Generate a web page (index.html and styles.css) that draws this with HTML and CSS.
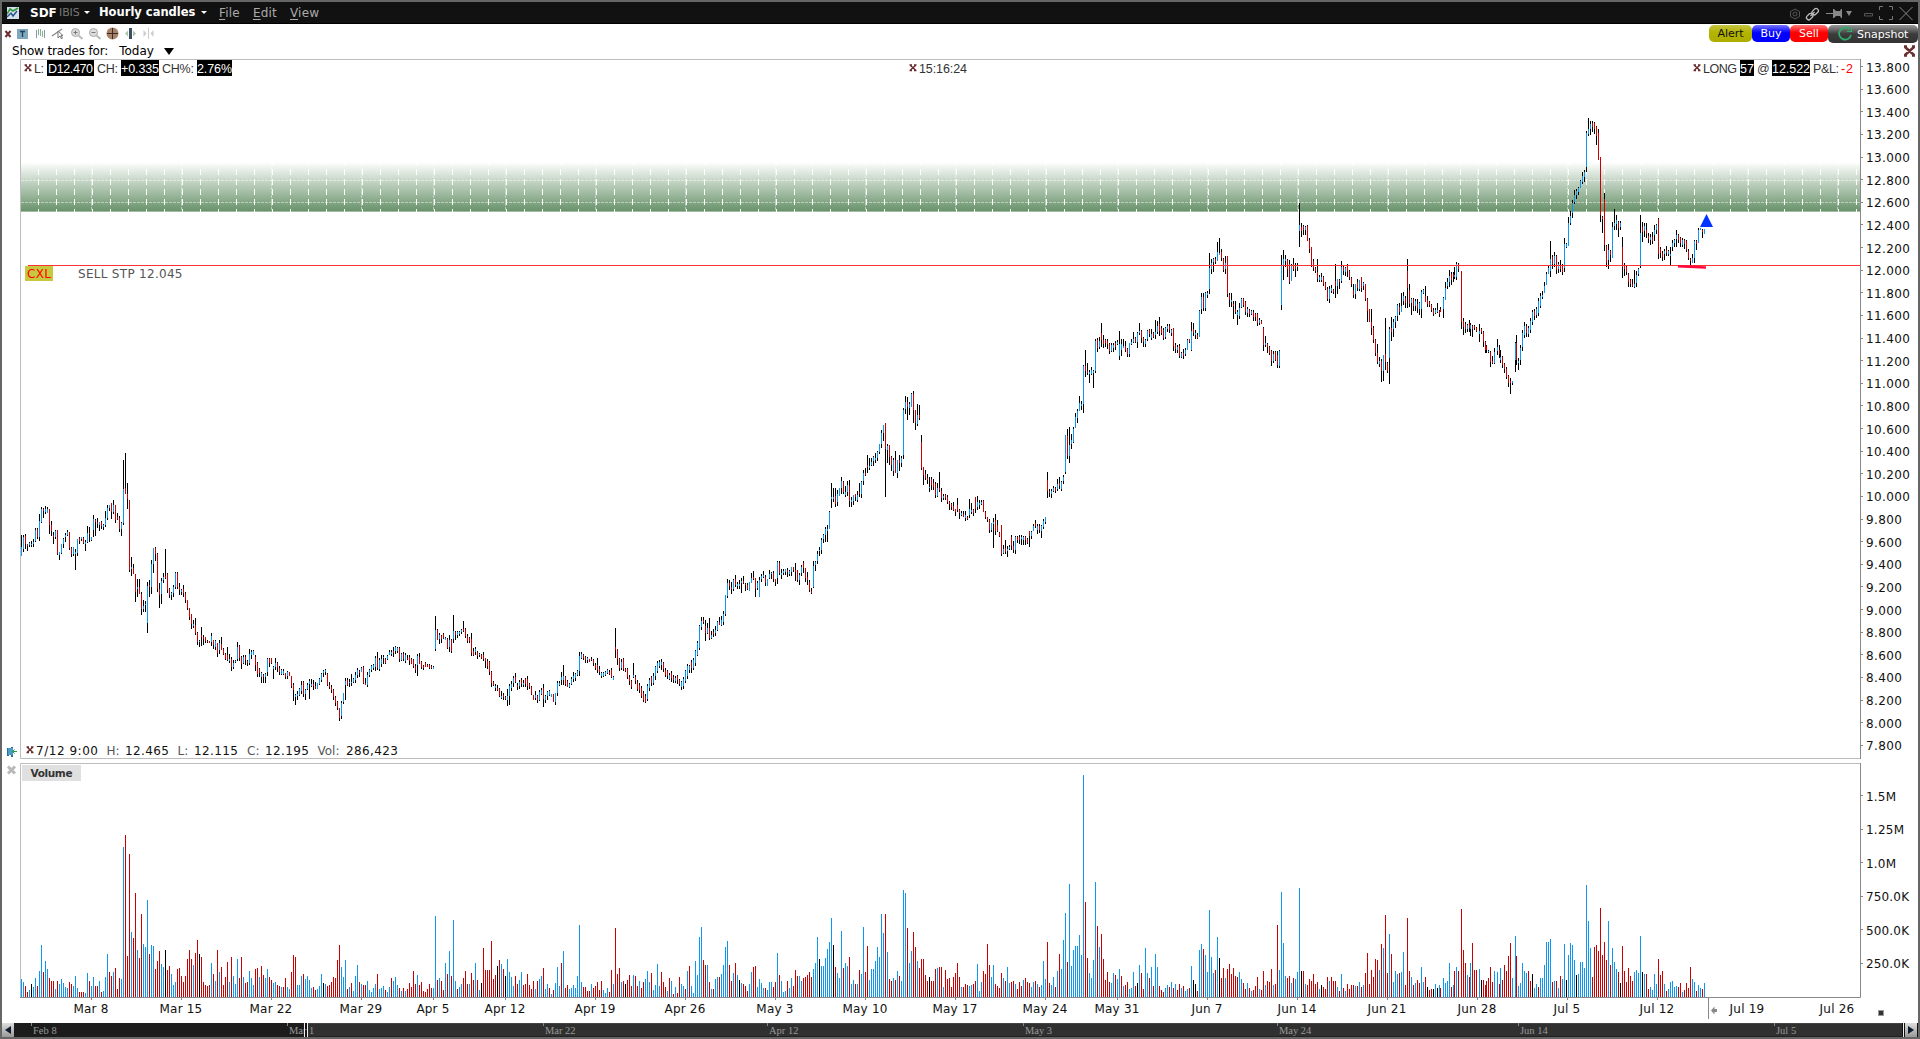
FILE: index.html
```
<!DOCTYPE html>
<html lang="en">
<head>
    <meta charset="UTF-8">
    <meta name="viewport" content="width=device-width, initial-scale=1.0">
    <title>SDF Hourly candles</title>
    <link rel="stylesheet" href="styles.css">
</head>
<body>

<div class="window">
    <header class="titlebar">
        <svg class="app-icon" width="12" height="12" viewBox="0 0 12 12">
            <rect width="12" height="12" fill="#d5e0ee"/>
            <path d="M0 7 L3 2 L6 4 L11 1" stroke="#2f9a3a" stroke-width="1.6" fill="none"/>
            <path d="M0 10 L4 6 L6 9 L10 4" stroke="#27508c" stroke-width="1.4" fill="none"/>
        </svg>
        <b class="symbol">SDF</b>
        <span class="exchange">IBIS</span>
        <i class="caret"></i>
        <b class="view-name">Hourly candles</b>
        <i class="caret"></i>
        <nav class="menu">
            <a><u>F</u>ile</a>
            <a><u>E</u>dit</a>
            <a><u>V</u>iew</a>
        </nav>
        <svg class="window-icons" width="126" height="18" viewBox="1788 3 126 18" fill="none">
            <path d="M1795 8 L1799.5 10.5 V15.5 L1795 18 L1790.500 15.500 V10.500 Z" stroke="#555"/>
            <circle cx="1795" cy="13" r="2" stroke="#555"/>
            <g stroke="#bbb" stroke-width="1.3">
                <rect x="-2" y="-3.500" width="4.500" height="7" rx="2" transform="translate(1815 10.500) rotate(45)"/>
                <rect x="-2" y="-3.500" width="4.500" height="7" rx="2" transform="translate(1809.500 15.500) rotate(45)"/>
                <path d="M1810.500 15 L1814.500 11"/>
            </g>
            <path d="M1826 12.500 H1834" stroke="#888"/>
            <path d="M1833 8 H1834 L1836 10 H1840 L1841 8 H1842 V17 H1841 L1840 15 H1836 L1834 17 H1833 Z" fill="#888"/>
            <path d="M1846 10 H1852 L1849 15 Z" fill="#888"/>
            <path d="M1864.500 12.500 H1872.500 V15 H1864.500 Z" stroke="#555"/>
            <path d="M1883 5.500 H1879.500 V9 M1889 5.500 H1892.500 V9 M1879.500 15 V18.500 H1883 M1892.500 15 V18.500 H1889" stroke="#777"/>
            <path d="M1899.500 6 L1912.500 19 M1912.500 6 L1899.500 19" stroke="#888"/>
        </svg>
    </header>

    <div class="toolbar">
        <svg class="tools" width="155" height="18" viewBox="2 24 155 18" fill="none">
            <path d="M5.500 31 L10.500 37 M10.500 31 L5.500 37" stroke="#6b2f2f" stroke-width="2"/>
            <rect x="17" y="29" width="11" height="10" fill="#7fa8bf"/>
            <path d="M20 31.500 H25 M22.500 31.500 V37" stroke="#223c55" stroke-width="1.300"/>
            <path d="M36.500 30 V38 M44.500 30 V38" stroke="#8a96b5"/>
            <path d="M38.500 29 V35 M40.500 29 V36 M42.500 31 V37" stroke="#84b48b"/>
            <path d="M52 36 L62 29" stroke="#888" stroke-width="1.300"/>
            <path d="M58 31 V38 L60 36 L61.500 39 L62.500 38 L61 35.500 H63 Z" stroke="#777" fill="#fff"/>
            <g stroke="#aaa">
                <circle cx="75.500" cy="32.500" r="4" fill="#ddd"/>
                <path d="M78.500 35.500 L82.500 39" stroke="#bbb" stroke-width="2"/>
                <path d="M73.500 32.500 H77.500 M75.500 30.500 V34.500" stroke="#777"/>
                <circle cx="93.500" cy="32.500" r="4" fill="#ddd"/>
                <path d="M96.500 35.500 L100.500 39" stroke="#bbb" stroke-width="2"/>
                <path d="M91.500 32.500 H95.500" stroke="#777"/>
            </g>
            <circle cx="112.500" cy="33.500" r="6" fill="#a8836b"/>
            <path d="M107 33.500 H118 M112.500 28 V39" stroke="#3c2a22"/>
            <rect x="129" y="28" width="3" height="11" fill="#3a4f60"/>
            <path d="M125 33.500 L128 30.500 V36.500 Z M136 33.500 L133 30.500 V36.500 Z" fill="#a9c8a9"/>
            <path d="M148.500 28 V39" stroke="#ccc"/>
            <path d="M143.500 30 V37 L146.500 33.500 Z M153.500 30 V37 L150.500 33.500 Z" fill="#ccc"/>
        </svg>
        <div class="actions">
            <button class="btn alert">Alert</button>
            <button class="btn buy">Buy</button>
            <button class="btn sell">Sell</button>
            <button class="btn snapshot">
                <svg width="16" height="16" viewBox="0 0 16 16" fill="none">
                    <path d="M12.500 3.500 A6 6 0 1 0 14 9" stroke="#2fae6b" stroke-width="1.700"/>
                    <path d="M10 5.500 L14.500 5.500 L14.500 1" stroke="#2fae6b" stroke-width="1.200"/>
                </svg>
                Snapshot
            </button>
        </div>
    </div>

    <div class="trades">
        <span>Show trades for:</span>
        <span class="period">Today</span>
        <i class="drop"></i>
        <svg class="close" width="13" height="12" viewBox="1903 46 13 12">
            <path d="M1905 48 L1914 56 M1914 48 L1905 56 M1904 47.500 H1907 M1912 47.500 H1915 M1904 56.500 H1907 M1912 56.500 H1915" stroke="#6b2f2f" stroke-width="2.600"/>
        </svg>
    </div>

    <svg class="chart" width="1916" height="964" viewBox="2 59 1916 964">
        <defs>
            <linearGradient id="zone" x1="0" y1="0" x2="0" y2="1">
                <stop offset="0" stop-color="#ffffff"/>
                <stop offset="1" stop-color="#69936b"/>
            </linearGradient>
            <path id="x" d="M1 1.500 L6 6 M6 1.500 L1 6 M0 1 H2.500 M4.500 1 H7 M0 6.500 H2.500 M4.500 6.500 H7" stroke="#6b2f2f" stroke-width="1.500"/>
        </defs>

        <!-- panel borders -->
        <path class="frame" d="M20.500 758.500 V59.500 H1860.500 M20.500 758.500 H1860.500"/>
        <path class="frame" d="M20.500 997.500 V763.500 H1860.500"/>
        <path class="axis" d="M1860.500 59 V759 M1860.500 763 V997.500 H20"/>
        <g id="ticks"></g>

        <!-- price zone -->
        <rect x="21" y="162" width="1839" height="49" fill="url(#zone)"/>
        <rect x="21" y="211" width="1839" height="1" fill="#a3bba4"/>
        <g id="zoneGrid"></g>

        <g id="candles"></g>
        <path d="M28 265.500 H1860" stroke="#ff3333"/>
        <path d="M1678 266.300 L1706 267.500" stroke="#ff0a3c" stroke-width="2.500"/>
        <path d="M1706.500 214 L1713 227 H1700 Z" fill="#0033ff"/>

        <rect x="25" y="266" width="28" height="15" fill="#c8c83e"/>
        <text class="txt red" x="27" y="278" textLength="24">CXL</text>
        <text class="txt dim" x="78" y="278" textLength="104.500">SELL STP 12.045</text>

        <!-- quote line -->
        <use href="#x" x="24.500" y="64"/>
        <g class="boxes">
            <rect x="47" y="60" width="47" height="16"/>
            <rect x="121" y="60" width="38" height="16"/>
            <rect x="197" y="60" width="35" height="16"/>
            <rect x="1740" y="60" width="14" height="16"/>
            <rect x="1772" y="60" width="38" height="16"/>
        </g>
        <g class="quote">
            <text x="34" y="73" textLength="10">L:</text>
            <text class="inv" x="48" y="73" textLength="45">D12.470</text>
            <text x="97" y="73" textLength="21">CH:</text>
            <text class="inv" x="121" y="73" textLength="38">+0.335</text>
            <text x="162" y="73" textLength="32">CH%:</text>
            <text class="inv" x="197" y="73" textLength="35">2.76%</text>
            <text x="919" y="73" textLength="48">15:16:24</text>
            <text x="1703" y="73" textLength="34">LONG</text>
            <text class="inv" x="1740" y="73" textLength="14">57</text>
            <text x="1757" y="73" textLength="13">@</text>
            <text class="inv" x="1772" y="73" textLength="38">12.522</text>
            <text x="1813" y="73" textLength="26">P&amp;L:</text>
            <text class="neg" x="1841" y="73" textLength="12">-2</text>
        </g>
        <use href="#x" x="909.500" y="64"/>
        <use href="#x" x="1693.500" y="64"/>

        <!-- bar under the cursor -->
        <use href="#x" x="26.500" y="746"/>
        <g class="txt">
            <text x="36" y="755" textLength="62">7/12 9:00</text>
            <text class="dim" x="106.500" y="755">H:</text>
            <text x="125" y="755" textLength="44">12.465</text>
            <text class="dim" x="177.500" y="755">L:</text>
            <text x="194" y="755" textLength="44">12.115</text>
            <text class="dim" x="247" y="755">C:</text>
            <text x="265" y="755" textLength="44">12.195</text>
            <text class="dim" x="317.500" y="755">Vol:</text>
            <text x="346" y="755" textLength="52">286,423</text>
        </g>
        <path d="M8 748 V756 M12 747 V757" stroke="#2b6d96" stroke-width="2"/>
        <rect x="8" y="748" width="5" height="7" fill="#4b9ac8"/>
        <path d="M17 751.500 H12 M14.500 749.500 L12.500 751.500 L14.500 753.500" stroke="#2a9a4a" fill="none"/>
        <path d="M8 766.500 L15 773.500 M15 766.500 L8 773.500" stroke="#b9b9b9" stroke-width="3"/>

        <rect x="22" y="765" width="59" height="16" fill="#e0e0e0"/>
        <text class="tab" x="30.500" y="777" textLength="42">Volume</text>
        <g id="volume"></g>
        <g id="dates" class="txt mid"></g>

        <path class="axis" d="M1708.500 998 V1019"/>
        <path d="M1711 1010.500 L1714.500 1006.500 V1009 H1717 V1012 H1714.500 V1014.500 Z" fill="#888"/>
        <rect x="1878.500" y="1010.500" width="5" height="5" fill="#333" stroke="#999"/>
    </svg>

    <footer class="scroller">
        <span class="arrow"><i class="left"></i></span>
        <svg class="track" width="1891" height="14" viewBox="14 1023 1891 14">
            <rect x="14" y="1023" width="290" height="14" fill="#1c1c1c"/>
            <rect x="308" y="1023" width="1594" height="14" fill="#303030"/>
            <path d="M308 1023.500 H1902" stroke="#444"/>
            <path d="M308 1036.500 H1902" stroke="#222"/>
            <path d="M1903.500 1023 V1037" stroke="#eee"/>
            <g id="overview" class="overview"></g>
            <path d="M304.500 1023 V1037 M307.500 1023 V1037" stroke="#eee"/>
        </svg>
        <span class="arrow"><i class="right"></i></span>
    </footer>
</div>

<script src="chart.js"></script>
</body>
</html>
```
FILE: styles.css
```
* {
    margin: 0;
    padding: 0;
    box-sizing: border-box;
}
body {
    font-family: Verdana, "DejaVu Sans", sans-serif;
    font-size: 12px;
    background-color: #666;
    overflow: hidden;
}
.window {
    width: 1920px;
    height: 1039px;
    padding: 2px;
    background-color: #666;
    display: flex;
    flex-direction: column;
}
svg {
    display: block;
    flex: none;
}
.titlebar {
    height: 22px;
    flex: none;
    display: flex;
    align-items: center;
    background-color: #111;
    border-bottom: 1px solid #000;
    color: #fff;
    padding-left: 5px;
    padding-right: 4px;
}
.app-icon {
    margin-right: 11px;
}
.symbol {
    font-size: 12px;
    width: 29px;
}
.exchange {
    font-size: 11px;
    color: #777;
    width: 25px;
    letter-spacing: -0.1px;
}
.caret {
    border: 3px solid transparent;
    border-top-color: #fff;
    border-bottom: 0;
    margin-right: 9px;
}
.view-name {
    width: 102px;
    font-size: 11.5px;
    letter-spacing: 0;
    white-space: nowrap;
    margin-top: -2px;
}
.menu {
    display: flex;
    gap: 13px;
    margin-left: 3px;
    color: #aaa;
    letter-spacing: 0.2px;
}
.menu u {
    text-underline-offset: 2px;
}
.window-icons {
    margin-left: auto;
}
.toolbar {
    height: 19px;
    flex: none;
    display: flex;
    justify-content: space-between;
    background-color: #fff;
}
.actions {
    display: flex;
    padding-top: 1px;
}
.btn {
    height: 17px;
    border: 0;
    border-radius: 5px;
    font-family: inherit;
    font-size: 11px;
    line-height: 17px;
    color: #fff;
    text-align: center;
}
.alert {
    width: 43px;
    color: #111;
    background: linear-gradient(#c5c545, #b3b300 45%, #aeae00);
}
.buy {
    width: 38px;
    background: linear-gradient(#7777ff, #0000ff 45%);
}
.sell {
    width: 38px;
    background: linear-gradient(#ff7777, #ff0000 45%);
}
.snapshot {
    width: 90px;
    height: 18px;
    display: flex;
    align-items: center;
    gap: 4px;
    padding-left: 9px;
    background: linear-gradient(#999, #3c3c3c 50%, #333);
}
.trades {
    height: 16px;
    flex: none;
    display: flex;
    align-items: center;
    padding-left: 10px;
    padding-right: 2px;
    background-color: #fff;
    line-height: 16px;
    letter-spacing: -0.15px;
}
.trades .period {
    margin-left: 11px;
    letter-spacing: 0;
}
.trades .close {
    margin-left: auto;
}
.drop {
    border: 5px solid transparent;
    border-top: 7px solid #000;
    border-bottom: 0;
    margin-left: 10px;
}
.chart {
    background-color: #fff;
}
.frame {
    fill: none;
    stroke: #bdbdbd;
}
.axis {
    fill: none;
    stroke: #888;
}
.txt {
    font-size: 12px;
    fill: #111;
}
.mid {
    text-anchor: middle;
    letter-spacing: 0.2px;
}
.dim {
    fill: #555;
}
.red {
    fill: #f00;
}
.quote {
    font-family: Arial, "Liberation Sans", sans-serif;
    font-size: 12.5px;
    fill: #333;
}
.quote .inv {
    fill: #fff;
}
.quote .neg {
    fill: #f00;
}
.tab {
    font-size: 10.5px;
    font-weight: bold;
    fill: #333;
}
.wick, .up, .down, .flat {
    fill: none;
    stroke: #000;
    shape-rendering: crispEdges;
}
.up {
    stroke: #0d96f2;
}
.down {
    stroke: #cc0000;
}
.scroller {
    height: 14px;
    flex: none;
    display: flex;
    background-color: #111;
}
.arrow {
    width: 12px;
    flex: none;
    display: flex;
    align-items: center;
    justify-content: center;
    background: linear-gradient(#ddd, #999);
}
.arrow i {
    border: 4px solid transparent;
}
.arrow .left {
    border-left: 0;
    border-right: 6px solid #0c1a2c;
}
.arrow .right {
    border-right: 0;
    border-left: 6px solid #0c1a2c;
}
.overview {
    font-family: "Liberation Serif", serif;
    font-size: 10.5px;
    fill: #999;
}
```
FILE: chart.js
```
// Each bar: colour (b up, r down, k unchanged), high y, upper wick, body, lower wick.
// Bars are 2px apart, @n moves to another x.
const candleData = `@21 b535,12,9,0 b535,2,12,3 r534,2,8,5 r544,0,2,5 b542,1,2,2 b541,3,1,2 b539,3,2,3 b528,2,11,1 r528,1,8,2 b514,7,16,4
b507,2,13,1 r508,1,2,7 b506,3,3,2 b507,2,4,0 r509,0,16,9 r521,4,6,5 r532,3,2,7 b530,1,6,2 r530,0,24,1 b552,0,3,5
b544,0,9,1 b538,1,5,4 b533,2,2,5 b530,2,3,1 r532,0,16,2 r547,1,6,3 b547,0,7,2 b549,3,2,16 b539,0,14,3 r537,1,3,3
b537,0,2,2 r537,1,5,1 b540,2,2,7 b526,7,9,1 r527,6,1,8 b537,0,3,1 b515,4,11,7 r519,1,2,14 r518,4,2,4 b522,0,3,6
r521,1,4,3 b524,1,2,3 b511,7,7,2 b505,3,10,2 b505,0,3,3 r503,0,9,7 b500,5,7,2 r505,0,15,3 r513,4,2,1 r516,2,11,3
b522,1,6,7 b460,29,34,2 r453,35,6,0 r483,11,5,10 r500,0,70,2 b557,10,2,7 r564,4,6,0 r574,0,18,10 b579,8,2,8 r579,8,7,0
r592,2,15,6 b600,6,3,3 b601,3,1,7 b582,4,37,10 r580,5,2,10 b560,4,23,7 b548,0,16,9 r547,1,6,7 r553,1,35,3 r583,6,6,13
b578,3,13,10 b573,4,3,3 r549,27,2,1 r573,1,16,3 r588,1,6,3 b592,1,2,5 b585,2,6,4 b572,1,14,2 r572,1,14,2 r583,4,3,5
b589,1,2,3 r585,4,4,4 r592,1,7,3 r600,0,8,2 r608,0,9,3 r614,0,10,5 b620,4,2,2 r618,7,8,2 r632,1,9,3 b640,1,1,5
r627,8,2,9 r635,2,2,6 r637,0,4,2 r640,1,1,1 r641,0,2,0 b633,3,6,4 r640,0,5,4 b640,1,6,3 r643,0,10,4 b640,3,7,4
r637,7,6,0 r648,1,5,1 r653,1,5,1 r647,8,5,1 b654,5,2,2 r657,2,8,4 b660,3,4,2 b660,1,1,1 b642,5,12,2 r645,1,12,3
r656,1,7,5 b655,2,6,1 r655,2,3,5 r660,1,2,3 b649,5,9,2 b650,2,3,4 b650,1,4,0 r655,2,8,6 r662,1,11,3 r668,1,4,4
b672,1,4,6 r674,1,2,6 b673,1,3,6 b658,1,13,4 r658,1,4,4 r658,0,5,1 b666,1,2,10 b658,5,4,3 r662,1,5,4 r666,2,4,3
b669,1,4,1 b669,2,3,1 r673,0,4,2 b671,1,4,3 r672,0,4,0 r676,0,10,2 r683,2,5,11 b694,1,2,8 b691,3,2,4 b688,1,6,1
b681,4,6,3 r681,1,12,3 b689,1,4,6 b683,2,4,1 b679,2,3,15 b679,5,2,1 r680,4,2,4 r682,4,3,0 b683,0,6,0 b678,1,5,1
b673,1,6,2 b670,1,2,4 b669,1,2,3 r673,1,11,1 r682,3,2,2 r685,2,3,3 r689,1,7,3 r696,1,6,3 r701,1,6,2 r708,0,10,3
b701,2,13,3 b693,0,9,2 b678,3,4,15 r678,2,5,1 b679,3,1,4 b674,8,1,3 b678,1,3,1 b672,3,5,3 b668,2,5,3 r670,1,2,4
b667,1,4,0 r666,1,16,1 r678,5,2,0 b672,3,10,2 b669,1,5,2 b665,1,4,2 b664,1,3,2 b656,2,9,4 r652,6,10,2 b658,2,9,2
b655,4,5,3 b655,2,1,6 r658,1,4,1 b655,1,3,1 b650,2,3,0 b650,2,2,2 r647,4,2,4 b646,1,4,3 b647,1,3,2 r647,1,11,3
b653,1,6,1 r652,2,5,2 b653,2,6,2 r655,3,1,1 r655,2,4,4 r658,1,5,0 r659,1,6,2 r664,2,4,3 b654,2,9,11 r653,4,7,0
r661,1,5,2 r665,1,2,2 r662,1,4,0 r664,1,2,0 r664,1,3,1 r665,1,2,1 b666,1,2,0 b616,14,19,2 r629,1,10,0 b633,2,4,5
r635,1,3,4 r633,1,4,1 b637,1,2,0 r638,1,9,1 b635,5,7,5 r639,1,11,2 b615,16,8,4 r631,1,3,5 b631,1,3,3 b631,1,2,2
b629,1,2,2 r621,8,2,1 r628,1,7,2 r634,2,5,2 r637,1,3,2 r633,6,14,3 r648,3,4,1 b647,2,3,3 r651,1,4,3 b653,1,1,2
r654,1,3,1 r652,3,4,2 r658,0,3,7 r659,2,5,3 r661,1,10,3 r671,1,11,4 r681,1,3,1 b684,2,2,3 r685,3,2,1 r688,1,7,1
b691,5,2,1 r693,2,2,3 r696,1,2,1 b689,7,4,6 b684,2,10,9 b681,3,4,3 b676,2,5,4 r673,4,5,1 r683,2,2,3 b680,2,4,3
r678,2,4,3 b680,3,2,2 r678,1,5,3 r676,3,7,4 r683,1,3,2 r686,1,7,1 r695,0,5,0 b691,4,3,2 r695,1,4,3 b690,2,8,1
b688,2,4,1 r684,4,11,8 b695,1,4,3 b691,1,4,4 b690,1,4,1 b694,0,3,0 r694,0,8,0 b693,0,9,3 b681,2,10,3 b681,2,2,1
b672,5,3,5 b665,11,4,5 r676,1,7,2 r680,1,6,0 b683,1,3,1 b677,2,5,1 b672,4,3,3 b673,1,4,3 b670,1,4,1 b652,4,15,5
b652,2,4,1 r654,1,3,2 r656,1,3,3 b657,1,2,3 r659,0,3,0 r657,2,1,1 r659,1,3,3 r663,2,3,2 r658,7,5,3 r666,3,3,3
b672,1,3,2 b672,1,3,1 b671,1,3,1 b669,1,3,1 r670,2,2,1 r668,2,7,1 b676,1,3,0 r628,19,3,8 r649,0,10,6 r658,1,9,3
b659,3,6,2 r658,1,10,2 r668,1,2,1 r668,1,8,2 r675,2,4,4 r680,1,6,2 b663,12,2,1 r675,2,4,3 r680,2,7,2 r683,2,5,3
r686,2,8,2 r691,2,7,2 r694,2,6,1 b684,2,13,2 b678,2,8,3 r676,1,6,3 b673,3,7,2 b666,1,9,4 b661,2,8,2 b660,2,4,2
b659,3,3,5 r662,1,6,3 r668,2,5,2 r670,1,5,3 b673,2,4,1 r671,2,5,4 r675,2,3,3 b676,2,3,2 r675,1,4,4 r679,1,4,2
b681,1,5,3 b677,2,7,3 b670,1,10,2 b664,2,10,3 b665,1,4,3 r660,2,6,5 b658,2,8,2 b650,1,12,3 b641,2,12,1 b625,1,22,2
b617,4,6,3 r617,3,2,2 r620,6,7,8 b623,5,5,1 r618,10,10,2 b631,4,3,1 r629,3,2,3 b626,4,3,3 b621,1,8,1 r617,5,3,0
b616,4,5,1 b611,3,8,3 b595,0,19,2 b579,4,13,2 r580,3,3,4 r582,5,2,5 b579,1,9,2 r575,4,6,2 b582,2,2,3 b580,4,2,3
b578,3,2,10 r576,5,2,1 r583,1,1,6 r583,2,4,1 b582,0,9,0 b573,5,5,0 r571,6,2,1 r578,0,11,8 b581,2,5,2 b577,3,17,0
b574,2,3,3 b571,4,2,1 r575,2,6,3 b579,0,7,0 b570,4,4,1 b572,1,1,5 r571,2,6,3 r579,0,3,4 b561,1,16,6 r561,2,10,2
b569,4,2,4 b569,2,2,2 b569,0,3,3 r568,2,2,5 b570,1,3,2 b567,0,5,4 r567,0,3,2 r563,7,2,9 r570,0,10,2 b573,2,5,5
b565,2,6,3 r561,2,5,5 r568,0,10,4 r572,5,3,5 r580,2,8,2 r588,3,2,1 b561,5,21,1 b561,1,3,6 b551,3,7,3 b547,3,1,5
b538,2,10,4 b534,1,4,4 b527,2,6,7 b525,4,2,11 b511,1,17,0 b483,14,2,9 b488,9,2,3 r488,8,8,3 b490,4,8,4 b488,0,8,0
b477,4,7,6 r481,1,10,2 b486,6,3,2 b481,4,7,4 r480,6,15,6 b497,3,2,5 b495,0,6,4 r494,0,3,4 b491,4,5,2 r483,9,2,3
b481,1,12,4 b470,3,8,4 r468,5,2,1 r455,10,2,6 b458,8,2,2 b458,4,3,1 b456,1,4,5 b453,5,2,3 b451,1,6,3 b444,0,8,2
b430,3,11,4 b425,0,8,8 r423,0,26,48 b444,2,4,13 r445,0,12,8 r456,1,8,6 b458,2,11,5 r451,9,13,0 b460,0,13,5 r455,5,3,8
b456,2,5,4 b408,2,45,4 b396,6,7,5 r397,5,5,13 b402,2,4,7 b393,1,13,0 r391,3,16,13 r410,0,13,7 b404,11,9,2 r405,10,3,2
r435,7,26,2 r467,0,8,10 r470,4,4,2 r474,4,2,4 b477,10,1,4 r477,2,6,5 r479,4,4,3 r482,2,11,3 b483,5,8,1 r472,16,2,2
r488,3,7,4 b494,2,2,2 r494,1,3,2 r495,2,5,2 r501,1,2,6 r503,1,3,3 r502,4,4,1 r509,0,3,4 r498,7,5,2 r509,1,3,6
b511,2,2,1 r511,3,3,0 b511,4,3,3 r516,1,2,1 b499,10,6,3 b503,7,2,2 r509,1,3,3 r497,0,12,4 b496,6,5,3 b500,3,2,4
b500,2,2,1 r500,1,11,0 r511,1,5,2 r517,0,3,2 r519,1,10,3 b523,0,7,2 b518,4,2,24 r514,6,11,4 r520,5,6,1 r532,1,3,1
r525,0,29,2 b545,4,4,1 r540,8,4,2 b546,3,2,6 b545,2,2,1 r535,2,9,4 r541,5,4,3 b536,1,13,4 r536,1,3,3 r535,2,3,4
b535,2,2,6 b536,1,3,5 r536,1,3,5 r538,1,4,1 r531,0,5,11 b531,1,4,3 b524,2,5,0 r520,3,3,2 b524,2,4,4 r524,2,4,3
b525,1,5,7 b519,2,6,2 b517,0,5,2 r472,8,11,7 r489,2,2,4 b489,2,3,4 b486,2,3,1 r487,1,3,2 b479,5,5,2 r477,6,3,3
b481,1,7,2 b475,2,4,3 b435,0,37,2 r429,7,20,3 b427,18,11,7 b434,6,4,5 b427,2,13,1 b413,4,11,0 b409,2,7,5 b396,7,8,0
b401,3,2,4 b365,1,38,9 r350,16,5,6 r363,8,2,2 b370,2,2,9 b367,3,4,1 b370,1,2,15 b339,2,30,2 r338,2,8,4 b337,4,6,2
r323,10,7,7 r335,5,4,4 r339,1,3,4 r339,2,3,5 r343,1,7,3 b343,2,6,1 b343,2,3,4 r341,2,4,3 b340,2,2,1 b331,13,12,4
b339,5,6,6 b339,7,2,0 r341,5,4,2 r348,1,5,3 b343,0,11,3 b339,3,2,1 b332,7,3,1 r337,1,4,1 b332,1,9,6 b323,8,2,2
r330,1,7,5 r337,1,4,5 b339,1,4,3 b330,1,8,2 r329,1,4,3 b329,5,4,2 r332,1,4,1 b320,12,3,4 b321,5,6,2 r317,7,7,5
r326,2,5,2 r328,2,8,2 b327,1,9,2 b324,2,3,3 r324,2,4,3 b329,1,3,3 r328,0,18,5 r343,2,4,4 b345,2,3,3 r344,2,10,2
b352,1,4,1 r349,4,3,3 b348,2,4,2 b339,1,10,0 r339,0,3,1 b322,9,19,1 r323,6,4,3 b330,3,2,4 r333,2,3,1 b310,1,26,0
b293,4,12,5 r293,4,11,3 b292,1,15,3 b291,2,2,3 b253,15,21,5 b259,4,6,5 b258,1,3,10 r257,2,3,2 b242,10,9,0 b238,15,2,0
r249,3,6,3 r258,1,11,2 b256,7,6,5 r256,0,38,3 r293,2,5,7 b293,7,2,5 r301,3,2,13 r301,8,3,2 b310,2,3,10 b303,5,8,3
b298,1,8,1 r298,1,6,2 r301,1,10,3 b307,2,4,4 r309,1,4,3 b310,1,3,1 r310,2,5,4 r313,1,3,4 r313,1,9,3 b318,2,3,2
r320,1,3,0 r327,1,17,6 b336,7,2,2 r343,1,3,6 r346,1,6,2 r350,1,10,5 b351,3,7,2 r351,1,8,1 r351,4,10,3 b350,1,15,2
b255,11,39,5 b250,9,7,14 b255,4,2,6 r259,1,9,8 r260,4,18,2 b264,2,15,0 r258,6,5,2 r263,3,3,8 b263,2,2,4 b203,22,6,16
r223,4,4,6 r225,1,4,5 b226,1,3,5 r225,1,15,0 r238,2,9,4 r247,0,18,2 r259,2,7,3 r267,1,3,2 r259,13,7,3 b275,2,3,2
b273,4,3,2 r276,1,7,2 r282,1,6,1 r287,2,10,2 b286,3,10,4 b285,3,3,2 r289,1,2,2 r264,17,5,12 b279,0,7,8 r279,1,2,7
b261,6,14,2 r265,2,4,4 b267,1,4,4 r264,1,6,6 r270,1,6,3 r277,1,6,3 r284,6,5,3 b284,0,10,5 r279,3,6,3 b280,0,9,2
r277,0,11,4 b282,1,3,4 r284,0,15,2 r298,1,12,11 r309,0,13,0 r309,13,6,7 r326,2,12,3 r339,1,13,3 r344,9,9,2 b357,4,3,3
r359,2,10,11 b355,0,16,10 r318,36,8,8 r362,1,8,2 b327,2,29,26 r317,11,4,9 b319,3,7,8 b316,1,5,6 b304,1,11,5 r303,4,5,3
b293,13,6,0 b292,4,5,4 r296,2,5,5 r259,12,17,20 r284,6,14,3 b298,1,4,12 r298,1,7,5 b299,2,5,5 r299,5,4,5 b302,1,6,6
b290,2,17,9 b289,1,3,1 r286,10,6,0 r296,4,4,3 r301,1,3,2 r304,1,5,2 r308,2,4,2 b308,2,3,1 b303,7,2,1 r310,1,3,3
@1440 r307,2,3,0 @1443 b297,1,11,9 b282,6,12,0 b278,4,4,3 b270,6,6,5 r272,2,6,5 r272,2,3,5 @1454 b267,8,2,2 b262,2,13,3 r263,1,5,3
@1461 r271,0,51,7 r318,3,6,8 r322,2,5,4 b324,1,4,3 r320,3,5,4 @1470 b323,2,4,7 r325,1,3,8 r325,1,2,2 r327,1,3,1
@1479 b324,7,3,8 r328,1,3,2 r331,1,10,5 r341,1,8,3 @1486 r345,1,4,3 b350,1,1,1 r351,1,10,5 r356,5,2,1 b348,4,11,1
@1497 b339,8,4,4 r345,5,4,4 @1500 b350,7,3,3 r356,1,8,3 r363,1,5,4 r367,2,8,2 r375,1,7,4 r378,3,2,11 b381,0,2,2
@1515 b342,1,17,12 @1516 r335,8,17,5 b358,3,2,7 b345,3,12,5 b330,3,14,4 b322,4,9,3 r324,2,7,4 b326,2,6,3 b318,3,9,3 b310,2,10,3 r309,2,5,4
b307,2,6,3 b298,3,12,3 b293,3,10,2 b291,4,2,2 b282,4,7,0 b272,2,11,0 b266,2,6,0 b241,18,12,6 r255,2,7,5 b252,4,8,3
r255,1,14,4 b262,2,5,4 r260,5,4,3 r264,1,7,3 b238,6,24,4 b243,1,3,1 b217,6,23,0 b211,5,7,2 b200,3,10,5 b190,5,7,2
b189,2,4,4 b187,1,4,3 b180,1,7,0 b172,4,6,2 b170,2,5,5 b131,2,34,5 b118,11,5,2 b121,3,5,6 r121,2,4,5 r122,1,6,5
r126,1,9,9 r129,4,27,0 r157,0,58,7 r216,1,2,14 r193,6,46,6 r245,1,17,4 b244,6,10,9 r250,1,4,7 b222,5,31,0 b209,14,3,4
b215,5,4,6 r221,1,6,9 b221,2,4,3 r237,10,20,11 r263,2,4,7 r266,1,5,3 r273,1,8,5 r279,1,4,3 r279,5,2,1 b270,14,3,1
b271,4,8,4 b268,1,5,2 b215,18,32,3 r222,5,5,10 b223,3,5,6 r223,7,4,4 r233,3,3,4 b234,3,3,5 r232,5,4,3 b225,5,5,6
b224,1,5,4 r218,1,35,5 r247,2,4,5 r251,2,4,4 b249,2,3,6 r246,4,3,3 b250,1,3,2 b247,7,2,9 b240,3,4,4 b239,1,3,4
b230,5,4,8 r234,1,5,3 r237,1,5,4 b238,2,5,2 r239,1,4,5 r240,1,9,2 r249,2,7,2 r258,1,2,4 b254,4,5,0 b240,1,17,5
r240,1,3,6 b228,2,13,0 b228,0,2,0 r229,1,2,6 b229,0,5,0`;

// Volume bars: colour and height.
const volumeData = `@21 b18 b15 r11 r5 b7 k13 b10 b19 r11 b26 b52 r25 b36 b28 r19 r16 r16 b8 r16 b13 b18 b14 b10 b9 r15 r13 b11 b21 b9 r5 r5 r5 b4 b24 r16 b11 b20 r11 r11 b16
r5 b6 b20 b43 r25 r21 b25 r29 r8 r19 b18 b150 r162 r41 r143 b65 r59 r104 b47 r39 r83 b53 b50 b97 r43 b52 b51 r28 r36 r46 b33 b30 k47 r27 r31 b23 b12 b15 r28 r29
r21 r15 r21 r38 r47 r38 b32 r44 r57 k43 r40 r15 r12 r11 r12 b34 r23 b16 r47 b25 r30 r12 r20 r35 b15 r40 b21 b13 b38 r19 r40 b20 r14 r15 b26 b19 b12 r28 r29 b20
r31 r22 b19 b28 r20 r17 b14 b15 r12 r11 b10 r10 r19 b10 b8 r25 r42 r40 b12 b12 b21 r23 b18 b21 b17 b9 r10 r7 b8 b11 b23 k14 b13 r11 r12 r15 r20 r19 r37 r52
b30 b20 b37 r8 b10 r14 b6 b21 b32 r15 b13 r12 r12 b16 b7 b5 b9 b13 r23 b8 b9 b11 r7 b5 b10 r19 b16 b20 b12 r9 b6 r9 b6 r8 r14 r10 r26 r13 b22 r12
r15 r6 r5 r8 r13 r9 b9 b81 r17 b19 r16 r7 b34 r23 b46 r21 b77 b16 r8 b10 b13 r19 r26 r13 b13 r24 r17 b34 r17 b7
@481 k14 r49 r27 r27 r27 r56 r18 r22 k31 r37 b33 r28 k21 b38 b25 b20 b11 r21 r13 b17 b25 r12 r13 r23 r12 r8 r16 b8 r16 b18 b21 r29 b8 b13 r9 b3 r7 b14 b30 b11
r34 b46 r9 r12 b8 b9 b12 b9 b21 b72 b15 r10 r10 r6 r6 b13 r9 r11 r15 r7 r16 b7 b4 b9 r5 r27 b13 r69 r23 r29 b15 r16 k13 r17 r22 r11 b22 r21 r11 b16
r9 r15 b18 b26 b15 r24 b7 b12 b33 b11 r25 r15 r10 b6 r19 b16 r3 b10 r4 r20 b13 b11 r8 b26 r31 b11 b4 b36 b22 b60 b70 r37 r32 b32 r15 b8 r8 b18 b20 r20
b23 b32 b50 b56 r32 r16 b24 r34 b22 k17 b14 r13 r11 r6 b13 b25 r30 r31 b10 b18 b14 b9 r9 b7 b15 b15 r10 r15 b44 r22 b16 b5 b6 r16 b9 b19 r11 r27 r21 b21
b16 r19 r20 r22 r25 r20 b28 b34 b60 k38 b31 b31 b39 b48 b55 b79 k52 r30 b24 b19 b66 r29 b34 b31 r40 b13 b17 r13 b13 r27 b23 b70 r25 r51 b17 b28 b28 b36 b50 b40
b83 b64 r83 b45 r18 r16 b19 r17 b26 r21 b16 b107 b104 r69 b34 b46 r65 r50 b36 r29 r38 r38 r22 r16 k20 r16 r16 r28 b29 r30 r30 b10 r27 r18 r19 r10 r20 r24 r34 r20
b10 r10 r13 r12 b11 b12 r13 r16 b33 b6
@981 b15 r26 r23 r53 r32 b20 b32 r13 r11 r9 r24 b19 r16 b30 b14 r15 r16 b13 r8 r15 r11 b17 r19 r15 r14 b10 b15 r16 b13 r10 b12 b36 b18 r55 r14 b12 b20 r10 b26 r43
b28 b57 b84 r35 b113 b31 b47 b51 b51 b62 b42 b222 r95 r39 b24 b19 b37 b115 r71 b50 r63 r38 r17 r25 r15 b14 b24 r22 b18 b28 r21 b11 r12 r15 b8 b9 b25 r11 k14 b32
r24 r8 b49 b24 r19 b30 r11 b43 b30 r11 r7 r5 b9 b12 r10 b15 r9 b13 r7 r13 b9 r11 b6 b8 r9 b31 k17 k13 r6 b47 b53 r48 b42 b25 b87 b40 b24 r27 b60 k39
r19 r29 b19 r28 r33 r23 r29 r21 r20 b25 b18 r14 r8 b14 r9 b6 r7 r11 r20 b8 r7 r26 b12 r16 r15 r28 b12 r13 r72 b27 b105 b54 b21 r19 r21 b14 r19 b18 b25 b109
k26 r26 b13 r12 r18 r16 r23 r13 r15 b8 k12 r10 r8 r20 b16 r20 r16 r16 b10 r6 b23 r9 b6 r13 r8 r12 r12 b11 r11 b15 r10 b12 r24 r44 r13 r27 r20 r38 r37 b27
r53 b49 r82 r24 b63 r43 b15 b26 b23 r24 b25 b45 r12 r79 r26 b20 r12 b14 r17 r14 b30 b15 r20 k10 r7 r8 k8 b13 k9 b12
@1440 r9 @1443 b19 b14 b16 b34 r10 b12 @1454 r26 b30 r26 @1461 r88 r47 r34 b22 r20 @1470 b34 r54 r27 r27 @1479 b28 k17 r17 r12 @1486 r16 r19 r30 r15 b26 @1497 b25 r13
@1500 b29 r17 r32 r26 r41 r54 b19 @1515 b61 @1516 r41 b11 b14 b34 b26 b24 r26 r16 k23 b9 b13 r10 b19 b19 b32 b55 b55 b58 r15 b16 r16 b9 r21 b18 b53 k17 b42 b54 b52 b37
k22 b23 b35 b35 b29 b112 b76 b49 r20 r50 r52 r46 r89 r42 r55 r37 b76 r32 b49 b35 b28 r25 k14 r51 r26 r15 r29 r21 r16 b25 b27 b24 b61 k25 b23 r23 r8 b10 b7 b23
b13 r38 r22 r26 b13 r6 b8 b15 b16 b10 b11 r10 r14 b5 r7 r14 r9 r30 b18 b15 r6 b12 b9 r8 b14`;

const classes = { b: 'up', r: 'down', k: 'flat' };

function eachBar(data, fn) {
    let x = 0;
    data.split(/\s+/).forEach(token => {
        if (token[0] === '@') {
            x = +token.slice(1);
            return;
        }
        fn(x + 0.5, token[0], token.slice(1).split(',').map(Number));
        x += 2;
    });
}

function paths(set) {
    return Object.keys(set).map(name => `<path class="${name}" d="${set[name]}"/>`).join('');
}

// candles
const candles = { wick: '', up: '', down: '' };
eachBar(candleData, (x, color, [high, upper, body, lower]) => {
    candles.wick += `M${x} ${high}v${upper + body + lower}`;
    candles[classes[color]] += `M${x} ${high + upper}v${body}`;
});
document.getElementById('candles').innerHTML = paths(candles);

// volume
const bars = { up: '', down: '', flat: '' };
eachBar(volumeData, (x, color, [height]) => {
    bars[classes[color]] += `M${x} 997v-${height}`;
});
document.getElementById('volume').innerHTML = paths(bars);

// price and volume axis
let ticks = '';
for (let i = 0; i <= 30; i++) {
    const y = 66.5 + i * 22.627;
    const label = (13.8 - i * 0.2).toFixed(3);
    const width = label.length > 5 ? 44 : 36;
    ticks += `<path class="axis" d="M1861 ${Math.floor(y) + 0.5}h2"/>`;
    ticks += `<text class="txt" x="1866" y="${Math.round(y + 5)}" textLength="${width}">${label}</text>`;
}
['1.5M', '1.25M', '1.0M', '750.0K', '500.0K', '250.0K'].forEach((label, i) => {
    const y = 795.5 + i * 33.5;
    const width = [30, 38, 30, 43, 43, 43][i];
    ticks += `<path class="axis" d="M1861 ${Math.floor(y) + 0.5}h2"/>`;
    ticks += `<text class="txt" x="1866" y="${Math.round(y + 5)}" textLength="${width}">${label}</text>`;
});

// dates
const dates = {
    91: 'Mar 8', 181: 'Mar 15', 271: 'Mar 22', 361: 'Mar 29', 433: 'Apr 5', 505: 'Apr 12', 595: 'Apr 19',
    685: 'Apr 26', 775: 'May 3', 865: 'May 10', 955: 'May 17', 1045: 'May 24', 1117: 'May 31', 1207: 'Jun 7',
    1297: 'Jun 14', 1387: 'Jun 21', 1477: 'Jun 28', 1567: 'Jul 5', 1657: 'Jul 12', 1747: 'Jul 19', 1837: 'Jul 26'
};
let dateText = '';
let grid = '';
Object.keys(dates).forEach(x => {
    dateText += `<text x="${x}" y="1013">${dates[x]}</text>`;
    if (x < 1700) ticks += `<path class="axis" d="M${+x + 0.5} 998v2"/>`;
    grid += `<path d="M${+x + 0.5} 163V211" stroke="#fff" stroke-opacity=".45" stroke-dasharray="3 1"/>`;
});
document.getElementById('dates').innerHTML = dateText;
document.getElementById('ticks').innerHTML = ticks;

// daily grid on the zone
for (let x = 38; x < 1860; x += 18) {
    grid += `<path d="M${x + 0.5} 159V212" stroke="#fff" stroke-dasharray="6 4"/>`;
}
grid += '<path d="M21 180.500H1860M21 202.500H1860" stroke="#fff" stroke-opacity=".45" stroke-dasharray="3 1"/>';
document.getElementById('zoneGrid').innerHTML = grid;

// overview strip
const months = { 31: 'Feb 8', 287: 'Mar 1', 543: 'Mar 22', 767: 'Apr 12', 1023: 'May 3', 1277: 'May 24', 1518: 'Jun 14', 1774: 'Jul 5' };
document.getElementById('overview').innerHTML = Object.keys(months).map(x =>
    `<path d="M${+x + 0.5} 1023v3" stroke="#888"/><text x="${+x + 2}" y="1034">${months[x]}</text>`
).join('');
```
